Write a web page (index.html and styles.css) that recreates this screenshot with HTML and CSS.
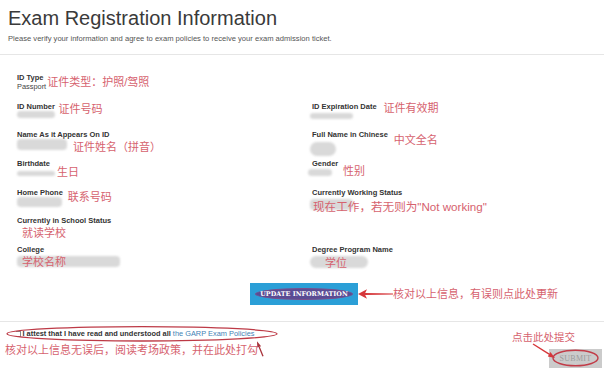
FILE: index.html
```html
<!DOCTYPE html>
<html>
<head>
<meta charset="utf-8">
<link rel="stylesheet" href="styles.css">
</head>
<body>
<header class="head">
  <h1 class="title">Exam Registration Information</h1>
  <p class="sub">Please verify your information and agree to exam policies to receive your exam admission ticket.</p>
</header>
<hr class="rule">
<section class="grid">
  <div class="cell">
    <div class="lbl">ID Type</div>
    <div class="vrow"><span class="val">Passport</span><span class="note n-idtype">证件类型：护照/驾照</span></div>
  </div>
  <div class="cell"></div>

  <div class="cell">
    <div class="lrow"><span class="lbl">ID Number</span><span class="note n-idnum">证件号码</span></div>
    <div class="vrow"><span class="blur b-idnum"></span></div>
  </div>
  <div class="cell">
    <div class="lrow"><span class="lbl">ID Expiration Date</span><span class="note n-exp">证件有效期</span></div>
    <div class="vrow"><span class="blur b-exp"></span></div>
  </div>

  <div class="cell">
    <div class="lbl">Name As it Appears On ID</div>
    <div class="vrow"><span class="blur b-name"></span><span class="note n-name">证件姓名（拼音）</span></div>
  </div>
  <div class="cell">
    <div class="lrow"><span class="lbl">Full Name in Chinese</span><span class="note n-cn">中文全名</span></div>
    <div class="vrow"><span class="blur b-cn"></span></div>
  </div>

  <div class="cell">
    <div class="lbl">Birthdate</div>
    <div class="vrow"><span class="blur b-birth"></span><span class="note n-birth">生日</span></div>
  </div>
  <div class="cell">
    <div class="lbl">Gender</div>
    <div class="vrow"><span class="blur b-gender"></span><span class="note n-gender">性别</span></div>
  </div>

  <div class="cell">
    <div class="lrow"><span class="lbl">Home Phone</span><span class="note n-phone">联系号码</span></div>
    <div class="vrow"><span class="blur b-phone"></span></div>
  </div>
  <div class="cell">
    <div class="lbl">Currently Working Status</div>
    <div class="vrow"><span class="blur b-work"></span><span class="note note-lg n-work">现在工作，若无则为"Not working"</span></div>
  </div>

  <div class="cell">
    <div class="lbl">Currently in School Status</div>
    <div class="vrow"><span class="note n-school">就读学校</span></div>
  </div>
  <div class="cell"></div>

  <div class="cell">
    <div class="lbl">College</div>
    <div class="vrow"><span class="blur b-college"></span><span class="note n-college">学校名称</span></div>
  </div>
  <div class="cell">
    <div class="lbl">Degree Program Name</div>
    <div class="vrow"><span class="blur b-degree"></span><span class="note n-degree">学位</span></div>
  </div>
</section>

<div class="upd">
  <div></div>
  <button class="upd-btn" type="button"><span class="upd-txt">UPDATE INFORMATION</span></button>
  <div class="upd-note">
    <svg class="upd-arrow" width="35" height="12" viewBox="0 0 35 12"><polygon points="0,6 9,1.2 7.2,5 35,5.4 35,6.6 7.2,7 9,10.8" fill="#d6363a"/></svg>
    <span class="ann">核对以上信息，有误则点此处更新</span>
  </div>
</div>

<hr class="rule rule2">

<footer class="foot">
  <div class="foot-left">
    <label class="attest"><span class="chk"></span><b>I attest that I have read and understood all</b>&nbsp;<a class="link">the GARP Exam Policies</a></label>
    <div class="ann foot-note">核对以上信息无误后，阅读考场政策，并在此处打勾</div>
    <svg class="mark-left" width="290" height="40" viewBox="0 0 290 40">
      <ellipse cx="142" cy="11.8" rx="135" ry="7.2" fill="none" stroke="#bd3a46" stroke-width="1.3"/>
      <line x1="263" y1="34.3" x2="259.2" y2="24.9" stroke="#a8323a" stroke-width="1.3"/>
      <polygon points="257,19.3 261.1,24.2 257.3,25.6" fill="#a8323a"/>
    </svg>
  </div>
  <div class="foot-right">
    <div class="ann submit-note">点击此处提交</div>
    <button class="submit-btn" type="button">SUBMIT</button>
    <svg class="mark-right" width="74" height="33" viewBox="0 0 74 33">
      <line x1="3" y1="4" x2="19.1" y2="14.2" stroke="#d6363a" stroke-width="1.4"/>
      <polygon points="25,18 17.8,16.4 20.4,12.1" fill="#d6363a"/>
      <ellipse cx="45.5" cy="18" rx="22.5" ry="7.8" fill="none" stroke="#c23c48" stroke-width="1.4"/>
    </svg>
  </div>
</footer>
</body>
</html>
```

FILE: styles.css
```css
* { box-sizing: border-box; }
body {
  margin: 0;
  width: 604px;
  height: 373px;
  overflow: hidden;
  background: #fff;
  color: #333;
  font-family: "Liberation Sans", Arial, sans-serif;
}
.head { padding: 6px 0 0 8px; }
.title {
  margin: 0;
  font-size: 20px;
  line-height: 24px;
  font-weight: 400;
  color: #3a3a3a;
}
.sub {
  margin: 4px 0 0;
  font-size: 7.6px;
  line-height: 9px;
  color: #555;
}
.rule {
  border: 0;
  border-top: 1px solid #e6e6e6;
  margin: 11px 0 0;
  height: 0;
}
.grid {
  display: grid;
  grid-template-columns: 295px 1fr;
  grid-template-rows: repeat(7, 28.7px);
  padding-left: 17px;
  margin-top: 18px;
}
.cell { display: flex; flex-direction: column; }
.lrow, .vrow { display: flex; align-items: flex-start; }
.lbl {
  font-size: 7.5px;
  line-height: 9px;
  font-weight: 700;
  color: #333;
  white-space: nowrap;
}
.val {
  font-size: 7.4px;
  line-height: 9px;
  color: #444;
}
.note, .ann {
  font-family: "Liberation Sans", "Noto Sans CJK SC", sans-serif;
  color: #d6626e;
  font-size: 11px;
  line-height: 12px;
  white-space: nowrap;
}
.note {
  height: 0;
  overflow: visible;
  position: relative;
  z-index: 1;
}
.note-lg { font-size: 11.6px; }
.blur {
  display: block;
  background: #d9d9d9;
  border-radius: 4px;
  filter: blur(1.2px);
  flex: none;
}
.n-idtype { margin: -5.8px 0 0 1px; }
.n-idnum { margin: 1px 0 0 3.6px; }
.b-idnum { width: 38px; height: 7px; }
.b-name { width: 50px; height: 11px; }
.n-name { margin: 1.3px 0 0 6px; }
.b-birth { width: 38px; height: 5.5px; margin-top: 2.6px; }
.n-birth { margin: -1.9px 0 0 2px; }
.n-phone { margin: 2.9px 0 0 4.8px; }
.b-phone { width: 45px; height: 10px; }
.n-school { margin: 1.2px 0 0 5px; }
.b-college { width: 103px; height: 11px; margin-top: 2px; }
.n-college { margin: 2px 0 0 -98px; }

.n-exp { margin: 0.5px 0 0 7px; }
.b-exp { width: 43px; height: 6px; margin: 2px 0 0 -2px; }
.n-cn { margin: 3.3px 0 0 6px; }
.b-cn { width: 26px; height: 14px; margin: 3px 0 0 -2px; border-radius: 7px; }
.b-gender { width: 24px; height: 7px; margin: 1px 0 0 -4px; }
.n-gender { margin: -2.7px 0 0 11px; }
.b-work { width: 43px; height: 11px; margin: 2px 0 0 -2px; }
.n-work { margin: 4.4px 0 0 -40px; }
.b-degree { width: 58px; height: 12px; margin: 2px 0 0 -2px; border-radius: 6px; }
.n-degree { margin: 2.8px 0 0 -43px; }

.upd {
  display: grid;
  grid-template-columns: 1fr auto 1fr;
  align-items: center;
  padding-left: 4px;
  margin-top: 9px;
}
.upd-btn {
  width: 108px;
  height: 22px;
  border: 0;
  padding: 0;
  margin: 0;
  background: #2b9fd7;
  display: flex;
  align-items: center;
  justify-content: center;
}
.upd-txt {
  font-family: "DejaVu Serif", serif;
  font-weight: 700;
  font-size: 6.4px;
  line-height: 8px;
  color: #fff;
  background: #5a4c94;
  border: 1px solid #7a4d8a;
  border-radius: 50%;
  padding: 1px 4px;
  white-space: nowrap;
}
.upd-note { display: flex; align-items: center; }
.upd-arrow { display: block; flex: none; }

.rule2 { margin-top: 16.5px; }
.foot {
  display: flex;
  justify-content: space-between;
  align-items: flex-start;
}
.foot-left {
  position: relative;
  padding-left: 5px;
}
.attest {
  display: flex;
  align-items: center;
  margin: 6.8px 0 0 11px;
  font-size: 7.4px;
  line-height: 9px;
  color: #333;
  white-space: nowrap;
}
.chk {
  width: 5px;
  height: 6px;
  border: 1px solid #888;
  border-left: 0;
  background: #fff;
  margin-right: 1.5px;
  flex: none;
}
.link { color: #3f82b5; }
.foot-note { margin-top: 6.2px; }
.mark-left {
  position: absolute;
  left: 0;
  top: 0;
}
.foot-right {
  position: relative;
  display: flex;
  flex-direction: column;
  align-items: flex-end;
  padding-right: 2px;
}
.submit-note {
  margin: 9px 27px 0 0;
  font-size: 10.5px;
  line-height: 13px;
}
.submit-btn {
  margin-top: 4.8px;
  width: 53px;
  height: 19px;
  border: 0;
  padding: 0;
  background: #cbcbcb;
  color: #9c9c9c;
  font-family: "Liberation Serif", serif;
  font-size: 8px;
  letter-spacing: 0.3px;
  display: flex;
  align-items: center;
  justify-content: center;
}
.mark-right {
  position: absolute;
  right: 0;
  top: 17.3px;
}
```
